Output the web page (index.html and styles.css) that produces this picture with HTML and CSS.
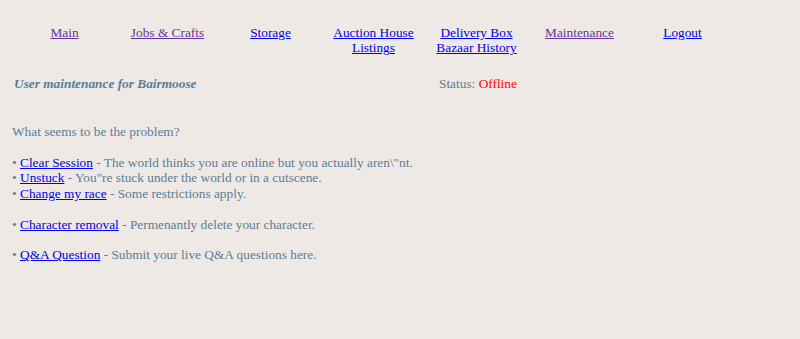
FILE: index.html
```html
<!DOCTYPE html>
<html lang="en">
<head>
  <meta charset="UTF-8" />
  <title>User Maintenance</title>
  <link rel="stylesheet" href="styles.css">
</head>
<body>

  <!-- Top menu -->
  <nav class="menu">
    <a class="visited" href="#main">Main</a>
    <a class="visited" href="#jobs">Jobs &amp; Crafts</a>
    <a href="#storage">Storage</a>
    <a href="#auction">Auction House<br>Listings</a>
    <a href="#delivery">Delivery Box<br>Bazaar History</a>
    <a class="visited" href="#maintenance">Maintenance</a>
    <a href="#logout">Logout</a>
  </nav>

  <!-- Header row -->
  <div class="header-row">
    <span class="user-title">User maintenance for Bairmoose</span>
    <span class="status">Status: <span class="offline">Offline</span></span>
  </div>

  <!-- Options -->
  <div class="options">
    What seems to be the problem?<br>
    <br>
    &bull; <a href="#clear">Clear Session</a> - The world thinks you are online but you actually aren\"nt.<br>
    &bull; <a href="#unstuck">Unstuck</a> - You"re stuck under the world or in a cutscene.<br>
    &bull; <a href="#race">Change my race</a> - Some restrictions apply.<br>
    <br>
    &bull; <a href="#remove">Character removal</a> - Permenantly delete your character.<br>
    <br>
    &bull; <a href="#qa">Q&amp;A Question</a> - Submit your live Q&amp;A questions here.
  </div>

</body>
</html>
```

FILE: styles.css
```css
body {
  margin: 8px;
  background-color: #eee9e5;
  color: #5a7d98;
  font-family: "Liberation Serif", "Times New Roman", serif;
  font-size: 13.33px;
  line-height: 15.4px;
}

a {
  color: #0000ee;
}

a.visited {
  color: #663399;
}

.menu {
  display: grid;
  grid-template-columns: repeat(7, 103px);
  padding: 17px 0 0 5px;
  text-align: center;
}

.header-row {
  display: grid;
  grid-template-columns: 425px auto;
  margin-top: 20px;
  padding-left: 6px;
}

.user-title {
  font-weight: bold;
  font-style: italic;
}

.offline {
  color: #ff0000;
}

.options {
  margin-top: 33px;
  padding-left: 4px;
}
```
